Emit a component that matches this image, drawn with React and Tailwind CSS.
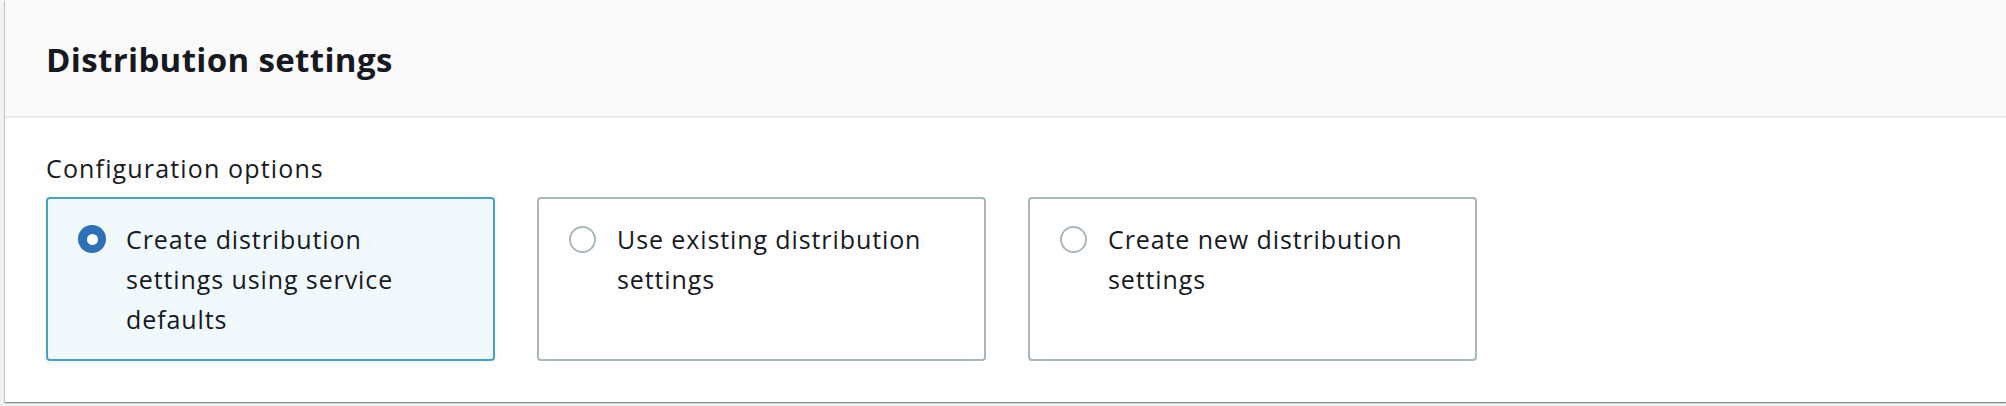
const options = [
  { id: "defaults", label: "Create distribution settings using service defaults" },
  { id: "existing", label: "Use existing distribution settings" },
  { id: "new", label: "Create new distribution settings" },
];

function Radio({ checked }) {
  if (checked) {
    return (
      <span className="mt-[6px] flex h-[28px] w-[28px] shrink-0 items-center justify-center rounded-full bg-[#2f71b6]">
        <span className="h-[11px] w-[11px] rounded-full bg-white" />
      </span>
    );
  }
  return (
    <span className="mt-[7px] h-[27px] w-[27px] shrink-0 rounded-full border-2 border-[#aab7b8] bg-white" />
  );
}

export default function App() {
  const selected = "defaults";

  return (
    <div
      className="h-[406px] w-full overflow-hidden bg-[#f2f3f3] pl-[5px]"
      style={{ fontFamily: '"Open Sans", "Noto Sans", sans-serif' }}
    >
      <div className="h-[402px] bg-white text-[#16191f] shadow-[0_1px_1px_0_rgba(0,28,36,0.3),1px_1px_1px_0_rgba(0,28,36,0.15),-1px_1px_1px_0_rgba(0,28,36,0.15)]">
        {/* Header */}
        <div className="flex h-[118px] items-center border-b-2 border-[#eaeded] bg-[#fafafa] px-[41px] pt-[3px]">
          <h2 className="text-[33px] font-bold leading-none tracking-[0.35px]">
            Distribution settings
          </h2>
        </div>

        {/* Body */}
        <div className="px-[41px] pt-[31px]">
          <div className="text-[25px] leading-[38px] tracking-[1.15px]">Configuration options</div>

          <div className="mt-[10px] flex gap-[42px]">
            {options.map((opt) => {
              const on = opt.id === selected;
              return (
                <div
                  key={opt.id}
                  className={
                    on
                      ? "flex h-[164px] w-[449px] gap-[20px] rounded-[4px] border-2 border-[#44a1cf] bg-[#f1f9fd] pl-[30px] pt-[20px]"
                      : "flex h-[164px] w-[449px] gap-[21px] rounded-[4px] border-2 border-[#aab7b8] bg-white pl-[30px] pt-[20px]"
                  }
                >
                  <Radio checked={on} />
                  <span className="max-w-[320px] text-[25px] leading-[40px] tracking-[0.9px]">
                    {opt.label}
                  </span>
                </div>
              );
            })}
          </div>
        </div>
      </div>
    </div>
  );
}
